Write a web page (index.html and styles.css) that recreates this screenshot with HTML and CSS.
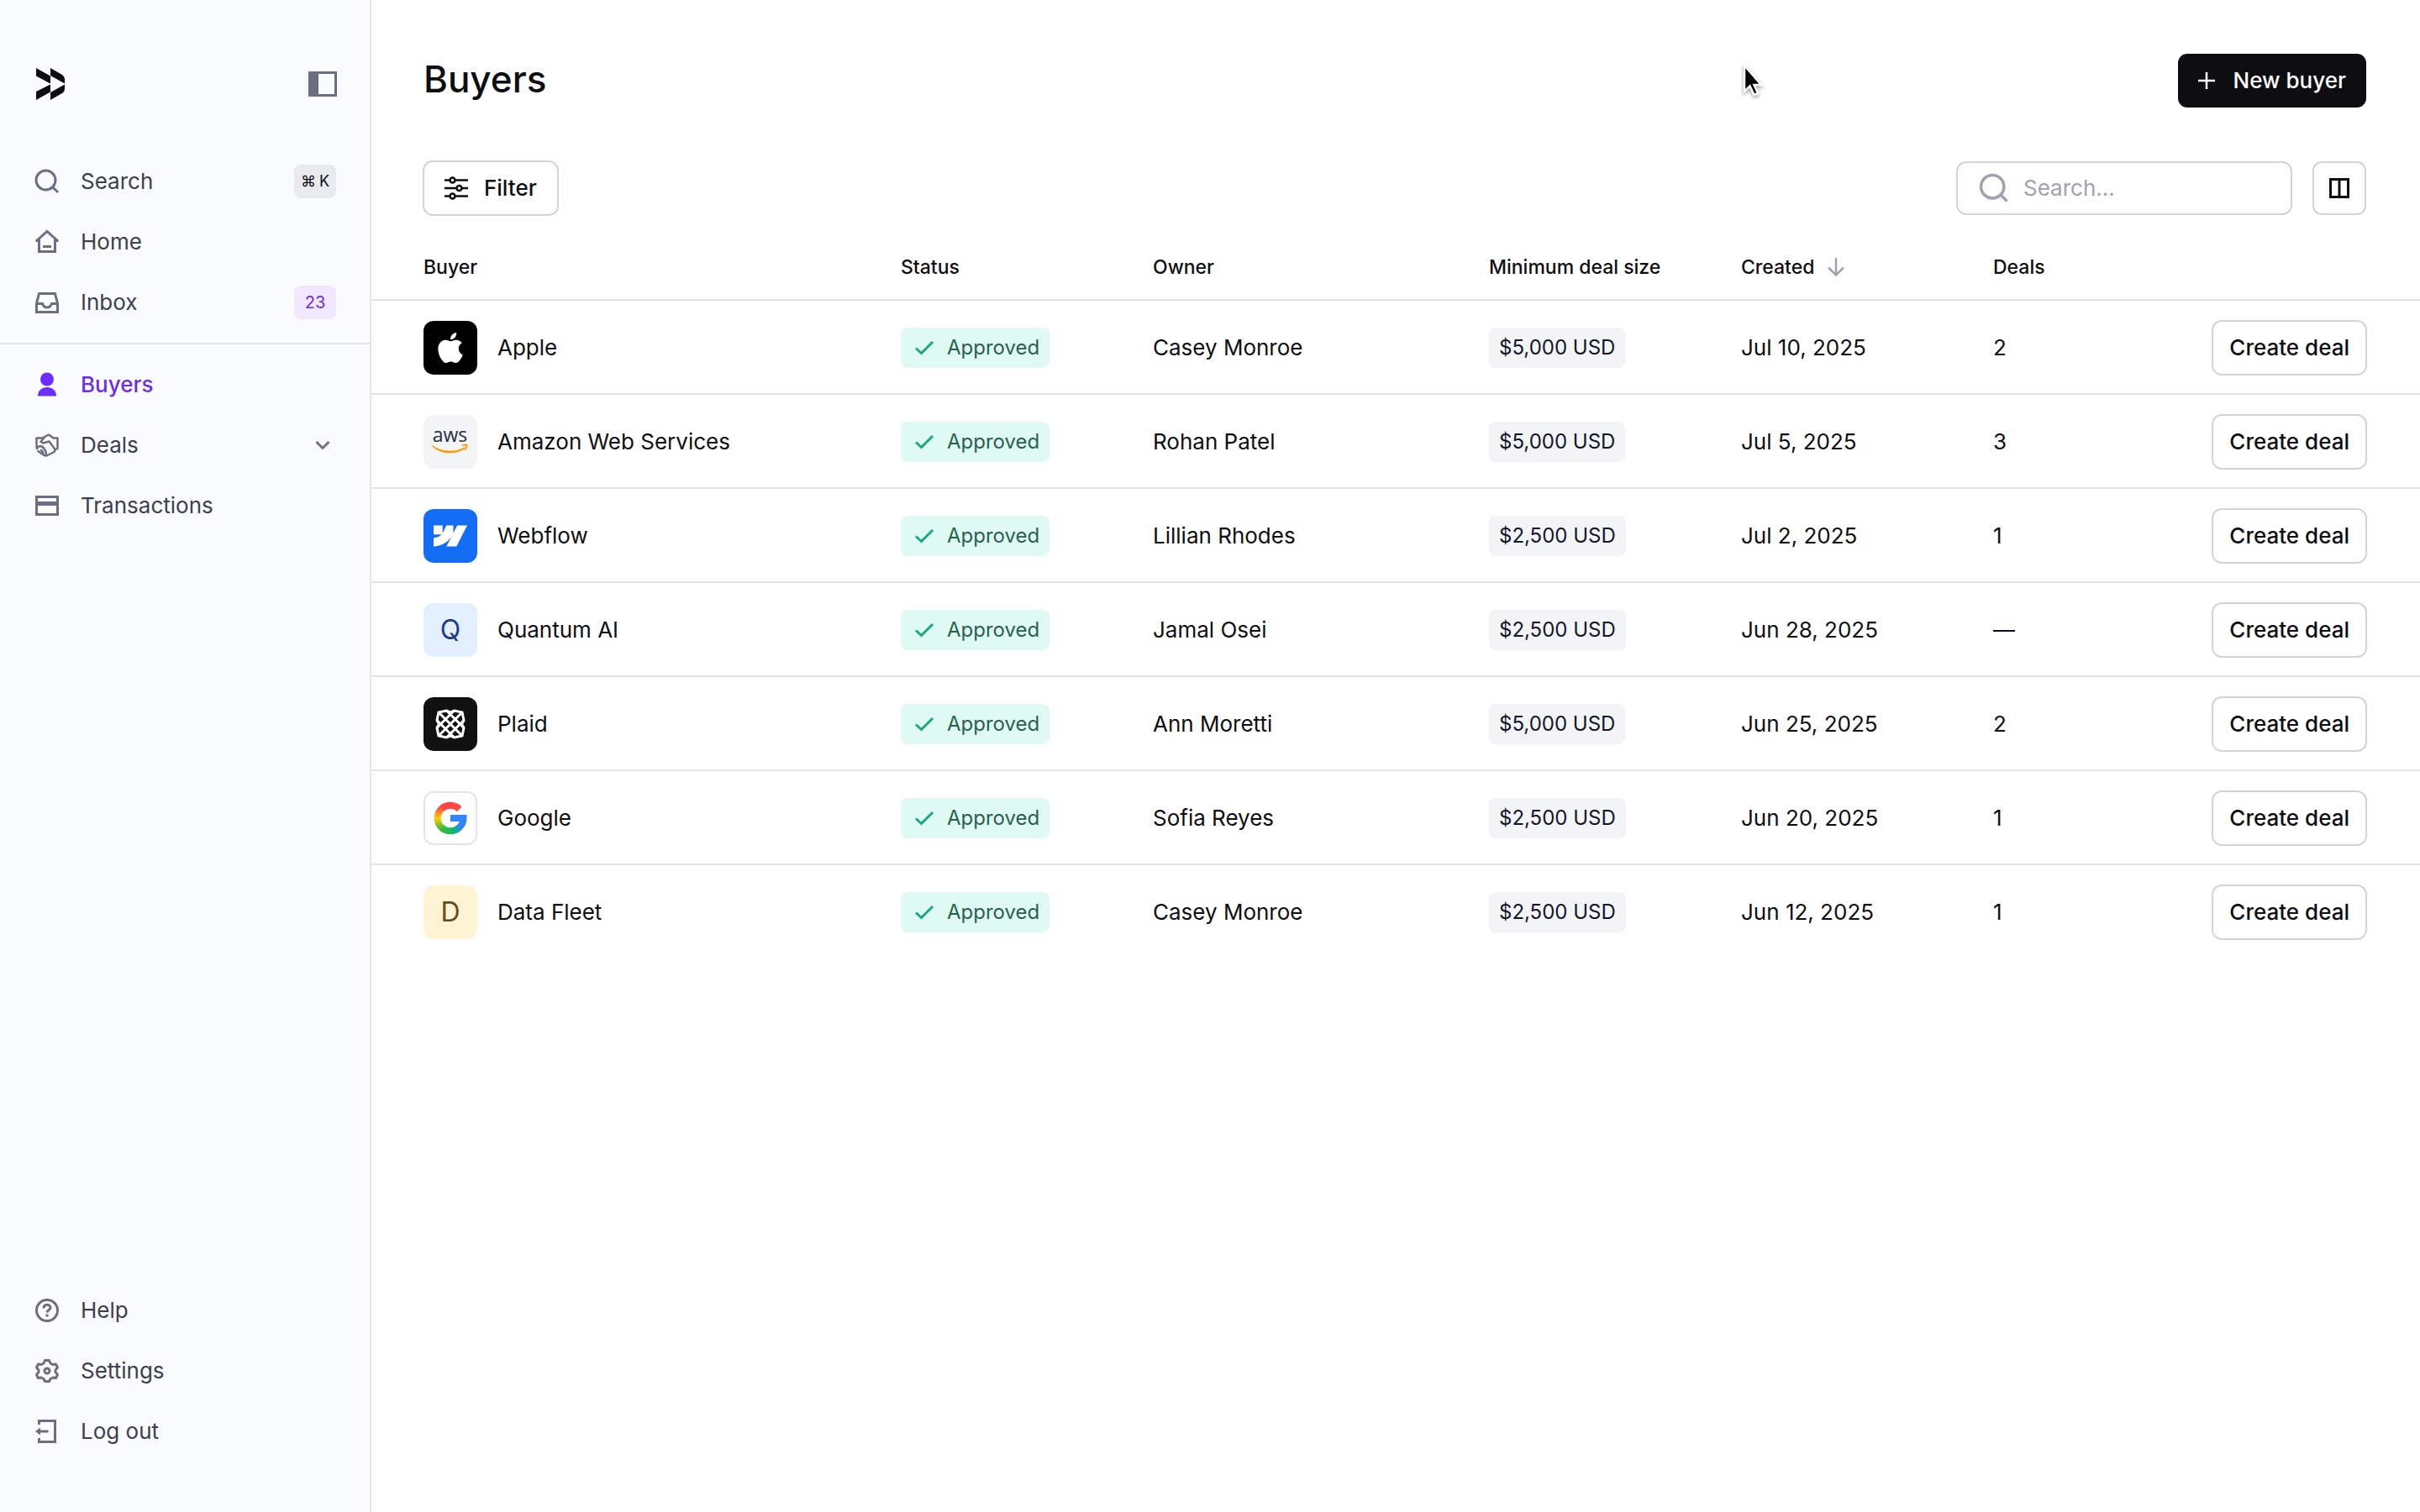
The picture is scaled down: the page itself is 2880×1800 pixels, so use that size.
FILE: index.html
```html
<!DOCTYPE html>
<html lang="en">
    <head>
        <meta charset="UTF-8" />
        <title>Buyers</title>
        <link rel="stylesheet" href="styles.css">
    </head>
    <body>
        <!-- Shared icons -->
        <svg class="sprite" aria-hidden="true">
            <symbol id="icon-search" viewBox="0 0 32 32">
                <circle cx="14.5" cy="14.5" r="11.5" />
                <path d="M22.5 22.5L29 29" />
            </symbol>
            <symbol id="icon-check" viewBox="0 0 24 18">
                <path d="M2 9.5L8.5 15.5L22 2" />
            </symbol>
        </svg>

        <div class="app">
            <aside class="sidebar">
                <div class="sidebar-header">
                    <svg class="logo" width="34" height="38" viewBox="0 0 34 38">
                        <path d="M0 0L17 9.5V18.5L0 9.5ZM17 19.5V28.5L0 38V28ZM17 0L31 8Q34 10 34 13V18.5L17 9ZM17 38L31 30Q34 28 34 25V19.5L17 29Z" />
                    </svg>
                    <button type="button" class="icon-btn" aria-label="Toggle sidebar">
                        <svg width="34" height="30" viewBox="0 0 34 30">
                            <rect x="1.5" y="1.5" width="31" height="27" fill="none" stroke="#6b7080" stroke-width="3" />
                            <rect width="12" height="30" fill="#6b7080" />
                        </svg>
                    </button>
                </div>

                <nav class="nav">
                    <a href="#" class="nav-item">
                        <svg class="icon" viewBox="0 0 32 32"><use href="#icon-search" /></svg>
                        <span>Search</span>
                        <kbd class="tag tag-key"><span>⌘</span><span>K</span></kbd>
                    </a>
                    <a href="#" class="nav-item">
                        <svg class="icon" viewBox="0 0 32 32">
                            <path d="M2.5 14.5H6.5V27.5H25.5V14.5H29.5M3 15L16 3.5L29 15M11 21.5H21" />
                        </svg>
                        <span>Home</span>
                    </a>
                    <a href="#" class="nav-item">
                        <svg class="icon" viewBox="0 0 32 32">
                            <path d="M6.5 5.5H25.5L28.5 17V27.5H3.5V17ZM3.5 17.5H10.5Q12 22 16 22T21.5 17.5H28.5" />
                        </svg>
                        <span>Inbox</span>
                        <span class="tag tag-count">23</span>
                    </a>
                </nav>

                <nav class="nav nav-main">
                    <a href="#" class="nav-item active">
                        <svg class="icon icon-solid" viewBox="0 0 32 32">
                            <circle cx="16" cy="9.5" r="8" />
                            <path d="M5 29.5C5 23 10 19 16 19S27 23 27 29.5Z" />
                        </svg>
                        <span>Buyers</span>
                    </a>
                    <a href="#" class="nav-item">
                        <svg class="icon" viewBox="0 0 32 32">
                            <g stroke-width="2.5" stroke-linejoin="round">
                                <path d="M3.5 19V7.5H10.5L18 3.5L23.5 7.5H28.5V20L25.5 21.5L24.5 24L15.5 28.5L12.5 28L4.5 22.5" />
                                <path d="M13.5 5.5L8.5 12L11.5 13.5L18.5 11.5L26 21.5" />
                                <path d="M4 21C4 17 9.5 15.5 12 19.5L14.5 23.5Q15.5 26 14 28.5M8.5 21L12 26" />
                            </g>
                        </svg>
                        <span>Deals</span>
                        <svg class="icon chevron" viewBox="0 0 32 32"><path d="M8.5 12L16 19.5L23.5 12" /></svg>
                    </a>
                    <a href="#" class="nav-item">
                        <svg class="icon" viewBox="0 0 32 32">
                            <rect x="3.5" y="5.5" width="25" height="21" />
                            <path d="M3 13.5H29" stroke-width="5" />
                        </svg>
                        <span>Transactions</span>
                    </a>
                </nav>

                <nav class="nav nav-footer">
                    <a href="#" class="nav-item">
                        <svg class="icon" viewBox="0 0 32 32">
                            <circle cx="16" cy="16" r="12.5" />
                            <path d="M12 13.5C12 8 20 8 20 12.8C20 15.5 16 15.5 16 18.5M16 20.5V23.5" />
                        </svg>
                        <span>Help</span>
                    </a>
                    <a href="#" class="nav-item">
                        <svg class="icon" viewBox="0 0 32 32">
                            <path d="M13.5 3.5H18.5L20 7L23 8.5L26.5 8L28.5 12L26 15V17.5L28.5 20.5L26.5 24.5L23 24L20 25.5L18.5 28.5H13.5L12 25.5L9 24L5.5 24.5L3.5 20.5L6 17.5V15L3.5 12L5.5 8L9 8.5L12 7Z" stroke-linejoin="round" />
                            <circle cx="16" cy="16" r="3" />
                        </svg>
                        <span>Settings</span>
                    </a>
                    <a href="#" class="nav-item">
                        <svg class="icon" viewBox="0 0 32 32">
                            <path d="M6.5 8V3.5H25.5V28.5H6.5V24M7 16H17.5" />
                            <path d="M8 11.5V20.5L2 16Z" fill="#6b7080" stroke="none" />
                        </svg>
                        <span>Log out</span>
                    </a>
                </nav>
            </aside>

            <main class="content">
                <header class="page-header">
                    <h1>Buyers</h1>
                    <button type="button" class="btn btn-primary">
                        <svg width="20" height="20" viewBox="0 0 20 20"><path d="M10 0V20M0 10H20" stroke="#fff" stroke-width="2.5" /></svg>
                        New buyer
                    </button>
                </header>

                <div class="toolbar">
                    <button type="button" class="btn btn-filter">
                        <svg width="28" height="28" viewBox="0 0 28 28" fill="none" stroke="#0e0e12" stroke-width="2.5">
                            <path d="M0 4.5H6M13 4.5H28M0 14H14M21 14H28M0 23.5H6M13 23.5H28" />
                            <circle cx="9.5" cy="4.5" r="3" />
                            <circle cx="17.5" cy="14" r="3" />
                            <circle cx="9.5" cy="23.5" r="3" />
                        </svg>
                        Filter
                    </button>
                    <div class="toolbar-right">
                        <label class="search-box">
                            <svg class="search-icon" viewBox="0 0 32 32"><use href="#icon-search" /></svg>
                            <input type="search" placeholder="Search..." aria-label="Search buyers" />
                        </label>
                        <button type="button" class="btn btn-square" aria-label="Edit columns">
                            <svg width="24" height="24" viewBox="0 0 24 24" fill="none" stroke="#0e0e12" stroke-width="3">
                                <rect x="1.5" y="1.5" width="21" height="21" />
                                <path d="M12 0V24" />
                            </svg>
                        </button>
                    </div>
                </div>

                <table class="buyers">
                    <colgroup>
                        <col />
                        <col class="col-status" />
                        <col class="col-owner" />
                        <col class="col-size" />
                        <col class="col-created" />
                        <col class="col-deals" />
                        <col class="col-action" />
                    </colgroup>
                    <thead>
                        <tr>
                            <th>Buyer</th>
                            <th>Status</th>
                            <th>Owner</th>
                            <th>Minimum deal size</th>
                            <th>
                                <span class="sorted">
                                    Created
                                    <svg width="20" height="22" viewBox="0 0 20 22"><path d="M10 0V20M1 11.5L10 20.5L19 11.5" fill="none" stroke="#9ea3b0" stroke-width="2.5" /></svg>
                                </span>
                            </th>
                            <th>Deals</th>
                            <th></th>
                        </tr>
                    </thead>
                    <tbody>
                        <tr>
                            <td>
                                <div class="buyer">
                                    <span class="avatar avatar-apple">
                                        <svg width="36" height="36" viewBox="0 0 24 24" fill="#fff"><path d="M12.152 6.896c-.948 0-2.415-1.078-3.96-1.04-2.04.027-3.91 1.183-4.961 3.014-2.117 3.675-.546 9.103 1.519 12.09 1.013 1.454 2.208 3.09 3.792 3.039 1.52-.065 2.09-.987 3.935-.987 1.831 0 2.35.987 3.96.948 1.637-.026 2.676-1.48 3.676-2.948 1.156-1.688 1.636-3.325 1.662-3.415-.039-.013-3.182-1.221-3.22-4.857-.026-3.04 2.48-4.494 2.597-4.559-1.429-2.09-3.623-2.324-4.39-2.376-2-.156-3.675 1.09-4.61 1.09zM15.53 3.83c.843-1.012 1.4-2.427 1.245-3.83-1.207.052-2.662.805-3.532 1.818-.78.896-1.454 2.338-1.273 3.714 1.338.104 2.715-.688 3.559-1.701" /></svg>
                                    </span>
                                    Apple
                                </div>
                            </td>
                            <td><span class="badge badge-approved"><svg width="24" height="18"><use href="#icon-check" /></svg>Approved</span></td>
                            <td>Casey Monroe</td>
                            <td><span class="badge badge-amount">$5,000 USD</span></td>
                            <td>Jul 10, 2025</td>
                            <td>2</td>
                            <td class="action"><button type="button" class="btn">Create deal</button></td>
                        </tr>
                        <tr>
                            <td>
                                <div class="buyer">
                                    <span class="avatar avatar-aws">
                                        <svg width="48" height="48" viewBox="0 0 48 48">
                                            <text x="23.5" y="24" text-anchor="middle">aws</text>
                                            <path d="M2 27.5C12 36 30 37 41 30.5L42 32C29 40.5 10 38.5 1.5 28.3Z" fill="#f90" />
                                            <path d="M37 27.5Q43 26 44.5 27.5Q45 31 41.5 35L41 34.5Q43 30.5 42.5 29Q40 28.2 37 28.5Z" fill="#f90" />
                                        </svg>
                                    </span>
                                    Amazon Web Services
                                </div>
                            </td>
                            <td><span class="badge badge-approved"><svg width="24" height="18"><use href="#icon-check" /></svg>Approved</span></td>
                            <td>Rohan Patel</td>
                            <td><span class="badge badge-amount">$5,000 USD</span></td>
                            <td>Jul 5, 2025</td>
                            <td>3</td>
                            <td class="action"><button type="button" class="btn">Create deal</button></td>
                        </tr>
                        <tr>
                            <td>
                                <div class="buyer">
                                    <span class="avatar avatar-webflow">
                                        <svg width="40" height="40" viewBox="0 0 24 24" fill="#fff"><path d="m24 4.515-7.658 14.97H9.149l3.205-6.204h-.144C9.566 16.713 5.621 18.973 0 19.485v-6.118s3.596-.213 5.71-2.435H0V4.515h6.417v5.278l.144-.001 2.622-5.277h4.854v5.244h.144l2.72-5.244H24Z" /></svg>
                                    </span>
                                    Webflow
                                </div>
                            </td>
                            <td><span class="badge badge-approved"><svg width="24" height="18"><use href="#icon-check" /></svg>Approved</span></td>
                            <td>Lillian Rhodes</td>
                            <td><span class="badge badge-amount">$2,500 USD</span></td>
                            <td>Jul 2, 2025</td>
                            <td>1</td>
                            <td class="action"><button type="button" class="btn">Create deal</button></td>
                        </tr>
                        <tr>
                            <td>
                                <div class="buyer">
                                    <span class="avatar avatar-q">Q</span>
                                    Quantum AI
                                </div>
                            </td>
                            <td><span class="badge badge-approved"><svg width="24" height="18"><use href="#icon-check" /></svg>Approved</span></td>
                            <td>Jamal Osei</td>
                            <td><span class="badge badge-amount">$2,500 USD</span></td>
                            <td>Jun 28, 2025</td>
                            <td>—</td>
                            <td class="action"><button type="button" class="btn">Create deal</button></td>
                        </tr>
                        <tr>
                            <td>
                                <div class="buyer">
                                    <span class="avatar avatar-plaid">
                                        <svg width="36" height="36" viewBox="0 0 36 36" fill="none" stroke="#fff" stroke-width="3">
                                            <path d="M18 4L13.5 2L4 4L2 13.5L4.5 18L2 22.5L4 32L13.5 34L18 32L22.5 34L32 32L34 22.5L31.5 18L34 13.5L32 4L22.5 2Z" />
                                            <path d="M4 4L32 32M32 4L4 32M13.5 2L34 22.5M2 13.5L22.5 34M22.5 2L2 22.5M34 13.5L13.5 34" />
                                        </svg>
                                    </span>
                                    Plaid
                                </div>
                            </td>
                            <td><span class="badge badge-approved"><svg width="24" height="18"><use href="#icon-check" /></svg>Approved</span></td>
                            <td>Ann Moretti</td>
                            <td><span class="badge badge-amount">$5,000 USD</span></td>
                            <td>Jun 25, 2025</td>
                            <td>2</td>
                            <td class="action"><button type="button" class="btn">Create deal</button></td>
                        </tr>
                        <tr>
                            <td>
                                <div class="buyer">
                                    <span class="avatar avatar-google">
                                        <svg width="40" height="40" viewBox="0 0 40 40" fill="none" stroke-width="8">
                                            <defs>
                                                <linearGradient id="g-left" gradientUnits="userSpaceOnUse" x1="0" y1="7" x2="0" y2="33">
                                                    <stop offset="0" stop-color="#ff4641" />
                                                    <stop offset="0.5" stop-color="#fc0" />
                                                    <stop offset="1" stop-color="#3cb83c" />
                                                </linearGradient>
                                                <linearGradient id="g-bottom" gradientUnits="userSpaceOnUse" x1="10" y1="0" x2="35" y2="0">
                                                    <stop offset="0" stop-color="#3cb83c" />
                                                    <stop offset="0.5" stop-color="#0ebc5f" />
                                                    <stop offset="1" stop-color="#3186ff" />
                                                </linearGradient>
                                            </defs>
                                            <path d="M30.7 9.1A15.5 15.5 0 0 0 9.5 8.8" stroke="#ff4641" />
                                            <path d="M9.7 8.6A15.5 15.5 0 0 0 9.7 31.4" stroke="url(#g-left)" />
                                            <path d="M9.5 31.2A15.5 15.5 0 0 0 30.5 31.2" stroke="url(#g-bottom)" />
                                            <path d="M30.3 31.4A15.5 15.5 0 0 0 35.5 20H20" stroke="#3186ff" />
                                        </svg>
                                    </span>
                                    Google
                                </div>
                            </td>
                            <td><span class="badge badge-approved"><svg width="24" height="18"><use href="#icon-check" /></svg>Approved</span></td>
                            <td>Sofia Reyes</td>
                            <td><span class="badge badge-amount">$2,500 USD</span></td>
                            <td>Jun 20, 2025</td>
                            <td>1</td>
                            <td class="action"><button type="button" class="btn">Create deal</button></td>
                        </tr>
                        <tr>
                            <td>
                                <div class="buyer">
                                    <span class="avatar avatar-d">D</span>
                                    Data Fleet
                                </div>
                            </td>
                            <td><span class="badge badge-approved"><svg width="24" height="18"><use href="#icon-check" /></svg>Approved</span></td>
                            <td>Casey Monroe</td>
                            <td><span class="badge badge-amount">$2,500 USD</span></td>
                            <td>Jun 12, 2025</td>
                            <td>1</td>
                            <td class="action"><button type="button" class="btn">Create deal</button></td>
                        </tr>
                    </tbody>
                </table>
            </main>
        </div>

        <!-- Mouse pointer -->
        <svg class="cursor" width="28" height="40" viewBox="0 0 28 40">
            <path d="M3 2V33L9.5 26.5L14.5 37L19 35L14.5 25H23Z" fill="#000" stroke="#fff" stroke-width="2.5" />
        </svg>
    </body>
</html>
```
FILE: styles.css
```css
* {
    box-sizing: border-box;
}

body {
    margin: 0;
    font-family: Inter, "Liberation Sans", sans-serif;
    font-size: 26px;
    line-height: 32px;
    color: #0e0e12;
    background-color: #fff;
}

button,
input,
kbd {
    font-family: inherit;
    font-size: inherit;
    line-height: inherit;
}

a {
    color: inherit;
    text-decoration: none;
}

svg {
    display: block;
    flex-shrink: 0;
}

.sprite {
    display: none;
}

.app {
    display: flex;
    min-height: 100vh;
}

/* Sidebar */
.sidebar {
    display: flex;
    flex-direction: column;
    flex-shrink: 0;
    width: 442px;
    padding: 60px 0;
    border-right: 2px solid #e4e5e9;
    background-color: #fafbfd;
}

.sidebar-header {
    display: flex;
    align-items: center;
    justify-content: space-between;
    height: 80px;
    margin-bottom: 40px;
    padding: 0 39px 0 43px;
}

.logo {
    fill: #0e0e12;
}

.icon-btn {
    padding: 0;
    border: none;
    background: none;
    cursor: pointer;
}

.nav-item {
    display: flex;
    align-items: center;
    gap: 24px;
    height: 72px;
    padding: 0 40px;
    color: #3a4050;
}

.nav-item.active {
    color: #6d2eea;
    font-weight: 500;
}

.nav-main {
    margin-top: 12px;
    padding-top: 12px;
    border-top: 2px solid #e4e5e9;
}

.nav-footer {
    margin-top: auto;
}

.icon {
    width: 32px;
    height: 32px;
    fill: none;
    stroke: #6b7080;
    stroke-width: 3;
}

.icon-solid {
    fill: #6f2cff;
    stroke: none;
}

.chevron {
    margin-left: auto;
}

.tag {
    display: flex;
    align-items: center;
    justify-content: center;
    width: 50px;
    height: 40px;
    margin-left: auto;
    border-radius: 8px;
    font-size: 20px;
}

.tag-key {
    gap: 4px;
    background-color: #e9eaee;
    color: #0e0e12;
    font-size: 18px;
}

.tag-count {
    background-color: #f1e8ff;
    color: #6d2eea;
}

/* Main area */
.content {
    flex: 1;
    min-width: 0;
    padding-top: 64px;
}

.page-header,
.toolbar {
    display: flex;
    align-items: center;
    justify-content: space-between;
    height: 64px;
    padding: 0 64px 0 62px;
}

.page-header {
    margin-bottom: 64px;
}

h1 {
    margin: 0;
    padding-bottom: 4px;
    font-size: 44px;
    line-height: 56px;
    font-weight: 500;
}

.btn {
    display: inline-flex;
    align-items: center;
    justify-content: center;
    height: 64px;
    padding: 0 20px;
    border: none;
    border-radius: 11px;
    outline: 2px solid #d3d4d9;
    outline-offset: -1px;
    background-color: #fff;
    color: #0e0e12;
    font-weight: 500;
    cursor: pointer;
}

.btn-primary {
    gap: 22px;
    padding: 0 24px;
    outline: none;
    background-color: #0e0e12;
    color: #fff;
}

.btn-filter {
    gap: 19px;
    padding: 0 25px;
}

.btn-square {
    width: 64px;
    padding: 0;
    outline-offset: -2px;
}

.toolbar-right {
    display: flex;
    gap: 24px;
}

.search-box {
    display: flex;
    align-items: center;
    gap: 16px;
    width: 400px;
    height: 64px;
    padding: 0 24px;
    border: 2px solid #d3d4d9;
    border-radius: 12px;
}

.search-icon {
    width: 38px;
    height: 38px;
    fill: none;
    stroke: #9ea3b0;
    stroke-width: 3;
}

.search-box input {
    flex: 1;
    min-width: 0;
    padding: 0;
    border: none;
    outline: none;
    background: none;
}

.search-box input::placeholder {
    color: #9ea3b0;
}

/* Buyers table */
.buyers {
    width: 100%;
    margin-top: 24px;
    border-collapse: separate;
    border-spacing: 0;
    table-layout: fixed;
}

.col-status,
.col-size,
.col-created {
    width: 300px;
}

.col-owner {
    width: 400px;
}

.col-deals {
    width: 258px;
}

.col-action {
    width: 250px;
}

th {
    height: 78px;
    padding: 0;
    border-bottom: 2px solid #e4e5e9;
    font-size: 23px;
    font-weight: 500;
    text-align: left;
}

td {
    height: 112px;
    padding: 2px 0 0;
    border-bottom: 2px solid #e4e5e9;
}

tbody tr:last-child td {
    border-bottom-color: transparent;
}

th:first-child,
td:first-child {
    padding-left: 62px;
}

.sorted {
    display: flex;
    align-items: center;
    gap: 16px;
}

.buyer {
    display: flex;
    align-items: center;
    gap: 24px;
}

.avatar {
    display: flex;
    align-items: center;
    justify-content: center;
    flex-shrink: 0;
    width: 64px;
    height: 64px;
    border-radius: 12px;
    font-size: 32px;
}

.avatar-apple {
    background-color: #000;
}

.avatar-aws {
    background-color: #f3f4f6;
}

.avatar-aws svg {
    overflow: visible;
}

.avatar-aws text {
    font-family: "Open Sans", "Noto Sans", sans-serif;
    font-size: 23px;
    font-weight: 500;
    fill: #252f3e;
}

.avatar-webflow {
    background-color: #146ef5;
}

.avatar-q {
    background-color: #e2efff;
    color: #233a85;
}

.avatar-plaid {
    background-color: #111;
}

.avatar-google {
    border: 2px solid #e4e5e9;
    background-color: #fff;
}

.avatar-d {
    background-color: #fef3d3;
    color: #6b4a1c;
}

.badge {
    display: inline-flex;
    align-items: center;
    height: 48px;
    padding: 0 12px;
    border-radius: 8px;
    font-size: 24px;
    vertical-align: middle;
}

.badge-approved {
    gap: 15px;
    padding-left: 16px;
    background-color: #dffaf2;
    color: #28614e;
}

.badge-approved svg {
    fill: none;
    stroke: #1fa67d;
    stroke-width: 3;
}

.badge-amount {
    background-color: #f3f4f6;
    color: #14142b;
}

.action {
    padding-right: 64px;
    text-align: right;
}

.cursor {
    position: absolute;
    top: 76px;
    left: 2073px;
    filter: drop-shadow(0 2px 2px rgba(0, 0, 0, 0.4));
}
```
